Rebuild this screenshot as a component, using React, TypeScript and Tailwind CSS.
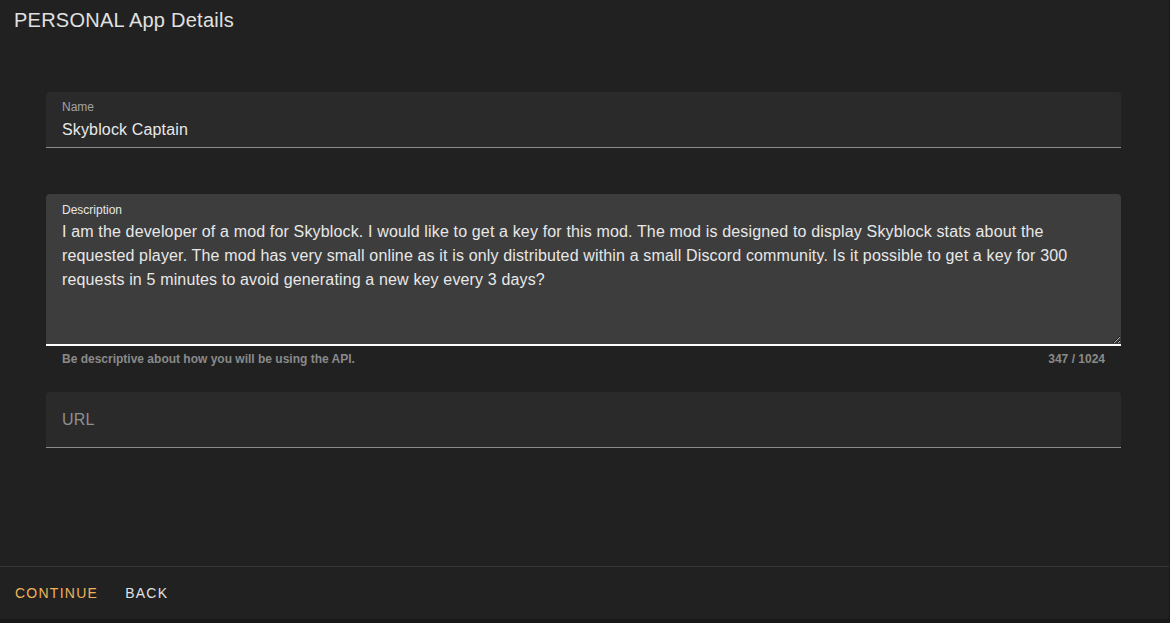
import { useState } from "react";

const DESCRIPTION =
  "I am the developer of a mod for Skyblock. I would like to get a key for this mod. The mod is designed to display Skyblock stats about the requested player. The mod has very small online as it is only distributed within a small Discord community. Is it possible to get a key for 300 requests in 5 minutes to avoid generating a new key every 3 days?";

export default function App() {
  const [name, setName] = useState("Skyblock Captain");
  const [description, setDescription] = useState(DESCRIPTION);
  const [url, setUrl] = useState("");

  return (
    <div className="min-h-screen bg-[#181818] [font-family:'Liberation_Sans',Arial,sans-serif]">
      <div className="flex h-[619px] w-[1169px] flex-col rounded-br-[4px] bg-[#212121]">
        {/* header */}
        <div className="flex h-10 items-center px-[14px]">
          <h1 className="text-[20px] leading-6 tracking-[0.25px] text-[#e0e0e0]">PERSONAL App Details</h1>
        </div>

        {/* form */}
        <div className="flex-1 pl-[46px] pr-[48px] pt-[52px]">
          <div className="h-[56px] rounded-t-[4px] border-b border-[#8c8c8c] bg-[#2a2a2a] px-4 pt-2">
            <label className="block text-[12px] leading-[14px] text-[#a3a3a3]">Name</label>
            <input
              className="mt-[4px] block w-full bg-transparent text-[16px] leading-6 tracking-[0.15px] text-[#e8e8e8] focus:outline-none"
              value={name}
              onChange={(e) => setName(e.target.value)}
            />
          </div>

          <div className="mt-[46px] rounded-t-[4px] border-b-2 border-white bg-[#3d3d3d] pt-[9px]">
            <label className="block px-4 text-[12px] leading-[14px] text-[#e6e6e6]">Description</label>
            <textarea
              autoFocus
              onFocus={(e) => {
                const l = e.target.value.length;
                e.target.setSelectionRange(l, l);
              }}
              className="mt-[3px] block h-[124px] w-full resize-y bg-transparent px-4 text-[16px] leading-6 tracking-[0.15px] text-[#e8e8e8] caret-white focus:outline-none"
              value={description}
              maxLength={1024}
              onChange={(e) => setDescription(e.target.value)}
            />
          </div>
          <div className="mt-[6px] flex justify-between px-4 text-[12px] font-bold leading-[14px] text-[#8a8a8a]">
            <span>Be descriptive about how you will be using the API.</span>
            <span>{description.length} / 1024</span>
          </div>

          <div className="mt-[26px] h-[56px] rounded-t-[4px] border-b border-[#8c8c8c] bg-[#2a2a2a] px-4 pt-[16px]">
            <input
              className="block w-full bg-transparent text-[16px] leading-6 tracking-[0.15px] text-[#e8e8e8] placeholder-[#8f8f8f] focus:outline-none"
              placeholder="URL"
              value={url}
              onChange={(e) => setUrl(e.target.value)}
            />
          </div>
        </div>

        {/* footer */}
        <div className="flex h-[53px] items-center gap-[27px] border-t border-[#363636] px-[15px]">
          <button className="text-[14px] tracking-[1.25px] text-[#f0b35a]">CONTINUE</button>
          <button className="text-[14px] tracking-[1.25px] text-[#e0e0e0]">BACK</button>
        </div>
      </div>
    </div>
  );
}
